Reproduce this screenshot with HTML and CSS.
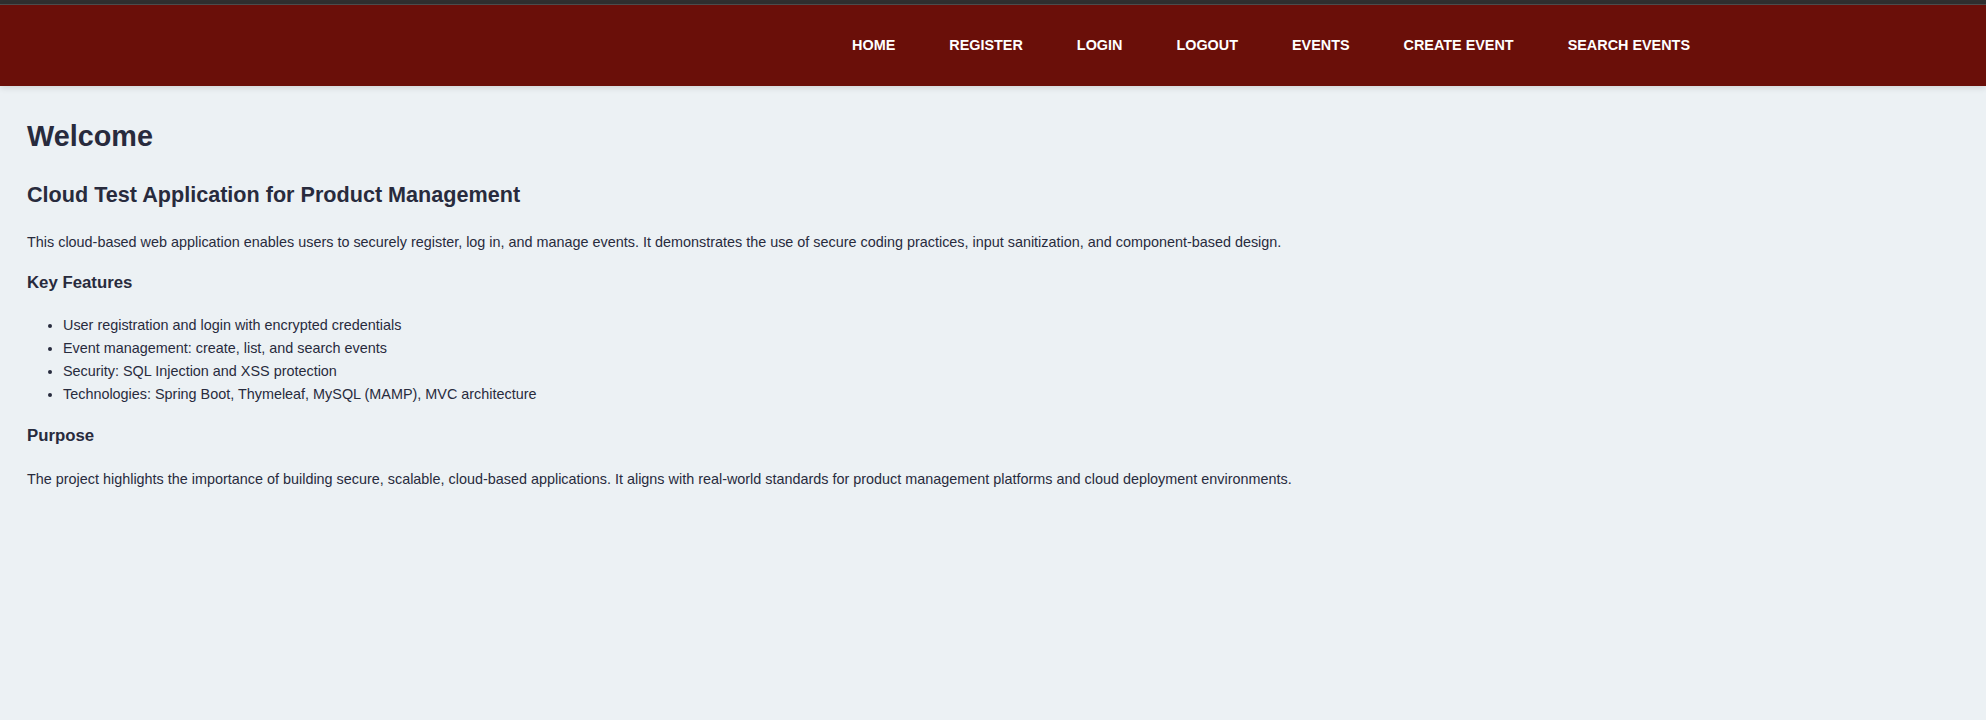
FILE: index.html
```html
<!DOCTYPE html>
<html lang="en">
<head>
<meta charset="utf-8">
<title>Welcome</title>
<link rel="stylesheet" href="styles.css">
</head>
<body>
<div class="topstrip"></div>
<header class="site-header">
  <nav class="nav">
    <a href="#">HOME</a>
    <a href="#">REGISTER</a>
    <a href="#">LOGIN</a>
    <a href="#">LOGOUT</a>
    <a href="#">EVENTS</a>
    <a href="#">CREATE EVENT</a>
    <a href="#">SEARCH EVENTS</a>
  </nav>
</header>
<main class="content">
  <h1 class="title">Welcome</h1>
  <h2 class="subtitle">Cloud Test Application for Product Management</h2>
  <p class="intro">This cloud-based web application enables users to securely register, log in, and manage events. It demonstrates the use of secure coding practices, input sanitization, and component-based design.</p>
  <h3 class="section">Key Features</h3>
  <ul class="features">
    <li>User registration and login with encrypted credentials</li>
    <li>Event management: create, list, and search events</li>
    <li>Security: SQL Injection and XSS protection</li>
    <li>Technologies: Spring Boot, Thymeleaf, MySQL (MAMP), MVC architecture</li>
  </ul>
  <h3 class="section section-after-list">Purpose</h3>
  <p class="body-text">The project highlights the importance of building secure, scalable, cloud-based applications. It aligns with real-world standards for product management platforms and cloud deployment environments.</p>
</main>
</body>
</html>
```
FILE: styles.css
```css
html, body {
  margin: 0;
  padding: 0;
}
body {
  background: #ecf1f4;
  color: #282b3d;
  font-family: "Liberation Sans", Arial, sans-serif;
  font-size: 14.4px;
}
.topstrip {
  height: 4px;
  background: #2f2f2f;
  border-bottom: 1px solid #4d4d4d;
}
.site-header {
  background: #6a0f09;
  height: 81px;
  box-sizing: border-box;
  padding: 0 296px 2px 0;
  display: flex;
  align-items: center;
  justify-content: flex-end;
  box-shadow: 0 2px 6px rgba(0, 0, 0, 0.12);
}
.nav {
  display: flex;
  gap: 54px;
}
.nav a {
  color: #ffffff;
  text-decoration: none;
  font-weight: bold;
  font-size: 14.4px;
  line-height: 18px;
}
.content {
  padding: 0 27px;
}
.title {
  font-size: 28.8px;
  line-height: 35px;
  margin: 33px 0 0;
}
.subtitle {
  font-size: 21.6px;
  line-height: 26px;
  margin: 28px 0 0;
}
.intro {
  margin: 24px 0 0;
  line-height: 20px;
}
.body-text {
  margin: 22px 0 0;
  line-height: 20px;
}
.section {
  font-size: 16.8px;
  line-height: 22px;
  margin: 20px 0 0;
}
.section-after-list {
  margin-top: 19px;
}
.features {
  margin: 20px 0 0;
  padding-left: 36px;
}
.features li {
  line-height: 23px;
}
```
